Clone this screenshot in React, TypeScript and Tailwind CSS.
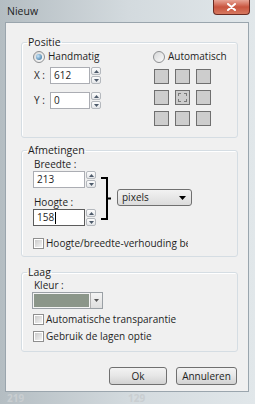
import React from 'react';

const Spin = () => (
  <div className="flex flex-col w-[10px] h-[17px] ml-[1px] gap-[1px]">
    <div className="flex-1 flex items-center justify-center border border-[#b4b8bd] rounded-[2px] bg-linear-to-b from-[#fdfdfd] to-[#e4e6e9]">
      <svg width="5" height="3" viewBox="0 0 5 3"><path d="M0 3L2.5 0L5 3Z" fill="#4d5a6a" /></svg>
    </div>
    <div className="flex-1 flex items-center justify-center border border-[#b4b8bd] rounded-[2px] bg-linear-to-b from-[#fdfdfd] to-[#e4e6e9]">
      <svg width="5" height="3" viewBox="0 0 5 3"><path d="M0 0L2.5 3L5 0Z" fill="#4d5a6a" /></svg>
    </div>
  </div>
);

const Radio = ({ checked }: { checked?: boolean }) => (
  <span className="w-[12px] h-[12px] rounded-full border border-[#8d8f91] bg-linear-to-br from-[#d6d7d8] to-[#fbfbfb] flex items-center justify-center shrink-0">
    {checked && <span className="w-[6px] h-[6px] rounded-full bg-[radial-gradient(circle_at_35%_35%,#c7e6fb,#2a6797)]" />}
  </span>
);

const Check = () => (
  <span className="w-[11px] h-[11px] border border-[#8f8f8f] bg-white flex items-center justify-center shrink-0">
    <span className="w-[7px] h-[7px] bg-linear-to-br from-[#cbcbcb] to-[#f3f3f3]" />
  </span>
);

const Input = ({ value, w, focused }: { value: string; w: string; focused?: boolean }) => (
  <div className={`h-[17px] ${w} bg-white border flex items-center pl-[3px] ${focused ? 'border-[#5c5c5c]' : 'border-[#abadb3]'}`}>
    <span>{value}</span>
    {focused && <span className="w-[1px] h-[12px] bg-black ml-[1px]" />}
  </div>
);

const Square = ({ center }: { center?: boolean }) => (
  <div className="w-[15px] h-[15px] border border-[#6f6f6f] bg-[#cdcdcd] flex items-center justify-center">
    {center && <div className="w-[9px] h-[9px] border border-dashed border-[#7a7a7a]" />}
  </div>
);

const Group = ({ title, h, mt, children }: { title: string; h: string; mt: string; children: React.ReactNode }) => (
  <fieldset className={`${mt} ml-[15px] w-[217px] ${h} border border-[#d5dde3] shadow-[inset_1px_1px_0_#ffffff] rounded-[3px]`}>
    <legend className="ml-[5px] px-[1px] leading-[14px] text-[10.5px] text-[#1e1e1e]">{title}</legend>
    {children}
  </fieldset>
);

export default function App() {
  return (
    <div className="w-[255px] h-[404px] overflow-hidden bg-linear-to-r from-[#b4bdc2] via-[#d3dade] to-[#e1e7ea] font-['Open_Sans','Noto_Sans',sans-serif] text-[10px] text-[#1e1e1e]">
      {/* Titel */}
      <div className="h-[22px] flex items-start justify-between">
        <span className="pl-[7px] pt-[4px] leading-[14px] text-[10.5px] text-[#222]">Nieuw</span>
        <div className="mr-[5px] w-[37px] h-[15px] rounded-b-[4px] border border-t-0 border-[#6b2b22] bg-linear-to-b from-[#e7a597] via-[#c8543f] to-[#d6785f] flex items-center justify-center">
          <svg width="9" height="8" viewBox="0 0 9 8">
            <path d="M1 1L8 7M8 1L1 7" stroke="#ffffff" strokeWidth="2" strokeLinecap="round" />
          </svg>
        </div>
      </div>

      {/* Inhoud */}
      <div className="ml-[5px] w-[244px] h-[370px] border border-[#9aa5ad] bg-[#f0f0f0] flex flex-col">
        <Group title="Positie" h="h-[103px]" mt="mt-[12px]">
          <div className="pl-[11px] pt-[1px]">
            <div className="flex h-[13px] items-center">
              <label className="w-[120px] flex items-center gap-[3px]">
                <Radio checked />
                <span>Handmatig</span>
              </label>
              <label className="flex items-center gap-[3px]">
                <Radio />
                <span>Automatisch</span>
              </label>
            </div>
            <div className="flex">
              <div className="w-[121px]">
                <div className="flex items-center mt-[4px]">
                  <span className="w-[17px] pl-[1px]">X :</span>
                  <Input value="612" w="w-[40px]" />
                  <Spin />
                </div>
                <div className="flex items-center mt-[8px]">
                  <span className="w-[17px] pl-[1px]">Y :</span>
                  <Input value="0" w="w-[40px]" />
                  <Spin />
                </div>
              </div>
              <div className="mt-[6px] grid grid-cols-[15px_15px_15px] gap-x-[6px] gap-y-[6px]">
                <Square /><Square /><Square />
                <Square /><Square center /><Square />
                <Square /><Square /><Square />
              </div>
            </div>
          </div>
        </Group>

        <Group title="Afmetingen" h="h-[114px]" mt="mt-[5px]">
          <div className="pl-[11px]">
            <div className="flex items-start">
              <div className="w-[63px]">
                <div className="leading-[14px] pl-[1px]">Breedte :</div>
                <div className="flex"><Input value="213" w="w-[52px]" /><Spin /></div>
                <div className="leading-[14px] pl-[1px] mt-[7px]">Hoogte :</div>
                <div className="flex"><Input value="158" w="w-[52px]" focused /><Spin /></div>
              </div>
              <svg className="mt-[20px] ml-[4px]" width="12" height="43" viewBox="0 0 12 43">
                <path d="M1 1H7V42H1M7 21.5H11" stroke="#000" strokeWidth="2" fill="none" />
              </svg>
              <div className="mt-[32px] ml-[5px] w-[75px] h-[17px] rounded-[3px] border border-[#707070] bg-linear-to-b from-[#f2f2f2] to-[#dcdcdc] flex items-center justify-between pl-[4px] pr-[5px]">
                <span>pixels</span>
                <svg width="7" height="4" viewBox="0 0 7 4"><path d="M0 0H7L3.5 4Z" fill="#000" /></svg>
              </div>
            </div>
            <label className="mt-[11px] flex items-center gap-[2px] h-[13px]">
              <Check />
              <span className="w-[142px] overflow-hidden whitespace-nowrap">Hoogte/breedte-verhouding behouden</span>
            </label>
          </div>
        </Group>

        <Group title="Laag" h="h-[87px]" mt="mt-[8px]">
          <div className="pl-[11px]">
            <div className="leading-[13px] pl-[1px]">Kleur :</div>
            <div className="w-[71px] h-[17px] border border-[#9aa0a5] flex ml-[-1px]">
              <div className="flex-1 bg-[#8b9689] border border-[#f4f4f4]" />
              <div className="w-[12px] bg-linear-to-b from-[#f4f4f4] to-[#dedede] border-l border-[#b0b0b0] flex items-center justify-center">
                <svg width="5" height="3" viewBox="0 0 5 3"><path d="M0 0H5L2.5 3Z" fill="#555" /></svg>
              </div>
            </div>
            <label className="mt-[4px] flex items-center gap-[2px] h-[13px]">
              <Check />
              <span>Automatische transparantie</span>
            </label>
            <label className="mt-[4px] flex items-center gap-[2px] h-[13px]">
              <Check />
              <span>Gebruik de lagen optie</span>
            </label>
          </div>
        </Group>

        <div className="mt-[15px] flex justify-end gap-[9px] pr-[11px]">
          <button className="w-[58px] h-[18px] rounded-[3px] border border-[#707070] bg-linear-to-b from-[#f3f3f3] via-[#e6e6e6] to-[#d2d2d2] leading-[14px]">Ok</button>
          <button className="w-[61px] h-[18px] rounded-[3px] border border-[#707070] bg-linear-to-b from-[#f3f3f3] via-[#e6e6e6] to-[#d2d2d2] leading-[14px]">Annuleren</button>
        </div>
      </div>

      {/* Achtergrond onder het glas */}
      <div className="flex h-[12px] items-center text-[10px] font-bold text-[#c9ced1] leading-[11px]">
        <span className="pl-[7px] w-[128px]">219</span>
        <span>129</span>
      </div>
    </div>
  );
}
